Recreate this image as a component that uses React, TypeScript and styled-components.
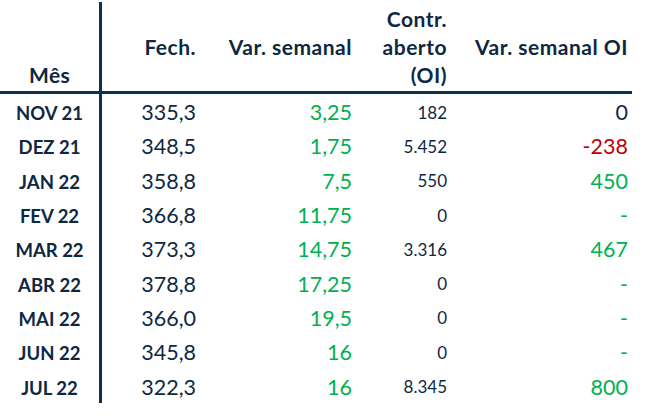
import React from 'react';
import styled, { createGlobalStyle } from 'styled-components';

const GlobalStyle = createGlobalStyle`
  html, body {
    margin: 0;
    padding: 0;
    background: #ffffff;
  }
  body {
    font-family: Lato, "Open Sans", "DejaVu Sans", sans-serif;
    color: #0e2841;
  }
`;

type Tone = 'dark' | 'green' | 'red';

interface Row {
  month: string;
  close: string;
  weekly: string;
  oi: string;
  oiWeekly: string;
  oiTone: Tone;
}

const rows: Row[] = [
  { month: 'NOV 21', close: '335,3', weekly: '3,25', oi: '182', oiWeekly: '0', oiTone: 'dark' },
  { month: 'DEZ 21', close: '348,5', weekly: '1,75', oi: '5.452', oiWeekly: '-238', oiTone: 'red' },
  { month: 'JAN 22', close: '358,8', weekly: '7,5', oi: '550', oiWeekly: '450', oiTone: 'green' },
  { month: 'FEV 22', close: '366,8', weekly: '11,75', oi: '0', oiWeekly: '-', oiTone: 'green' },
  { month: 'MAR 22', close: '373,3', weekly: '14,75', oi: '3.316', oiWeekly: '467', oiTone: 'green' },
  { month: 'ABR 22', close: '378,8', weekly: '17,25', oi: '0', oiWeekly: '-', oiTone: 'green' },
  { month: 'MAI 22', close: '366,0', weekly: '19,5', oi: '0', oiWeekly: '-', oiTone: 'green' },
  { month: 'JUN 22', close: '345,8', weekly: '16', oi: '0', oiWeekly: '-', oiTone: 'green' },
  { month: 'JUL 22', close: '322,3', weekly: '16', oi: '8.345', oiWeekly: '800', oiTone: 'green' },
];

const toneColor = (tone: Tone) =>
  tone === 'green' ? '#00b050' : tone === 'red' ? '#c00000' : '#0e2841';

const App = () => {
  return (
    <>
      <GlobalStyle />
      <Page>
        <Table>
          <HeaderRow>
            <MonthHead>Mês</MonthHead>
            <HeadCell>Fech.</HeadCell>
            <HeadCell>Var. semanal</HeadCell>
            <HeadCell>
              Contr.
              <br />
              aberto
              <br />
              (OI)
            </HeadCell>
            <HeadCell>Var. semanal OI</HeadCell>
          </HeaderRow>
          {rows.map((r) => (
            <BodyRow key={r.month}>
              <MonthCell>{r.month}</MonthCell>
              <NumCell>{r.close}</NumCell>
              <NumCell tone="green">{r.weekly}</NumCell>
              <SmallCell>{r.oi}</SmallCell>
              <NumCell tone={r.oiTone}>{r.oiWeekly}</NumCell>
            </BodyRow>
          ))}
        </Table>
      </Page>
    </>
  );
};

const Page = styled.div`
  padding-top: 2px;
`;

const Table = styled.div`
  width: 632px;
  display: flex;
  flex-direction: column;
`;

const HeaderRow = styled.div`
  display: grid;
  grid-template-columns: 102px 98px 156px 95px 181px;
  height: 89px;
  border-bottom: 3px solid #0b3050;
`;

const MonthHead = styled.div`
  border-right: 3px solid #0b3050;
  display: flex;
  align-items: flex-end;
  justify-content: center;
  padding-bottom: 4px;
  font-weight: 700;
  font-size: 21px;
  letter-spacing: 0.3px;
`;

const HeadCell = styled.div`
  display: flex;
  align-items: center;
  justify-content: flex-end;
  text-align: right;
  padding-right: 4px;
  font-weight: 700;
  font-size: 21px;
  letter-spacing: 0.5px;
  line-height: 28px;
`;

const BodyRow = styled.div`
  display: grid;
  grid-template-columns: 102px 98px 156px 95px 181px;
  height: 34.3px;
`;

const MonthCell = styled.div`
  border-right: 3px solid #0b3050;
  display: flex;
  align-items: center;
  justify-content: center;
  padding-top: 4px;
  font-weight: 700;
  font-size: 18.5px;
`;

const NumCell = styled.div<{ tone?: Tone }>`
  display: flex;
  align-items: center;
  justify-content: flex-end;
  padding-right: 4px;
  padding-top: 2px;
  font-size: 21.5px;
  color: ${(p) => toneColor(p.tone || 'dark')};
`;

const SmallCell = styled(NumCell)`
  font-size: 17px;
`;

export default App;
